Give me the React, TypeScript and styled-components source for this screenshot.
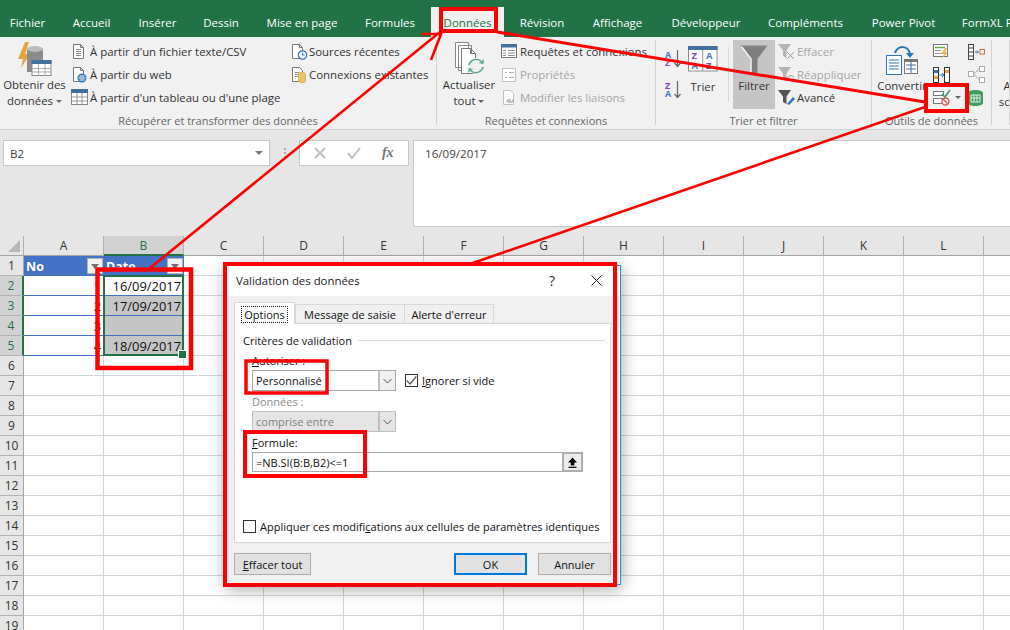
import React from 'react';
import styled, { createGlobalStyle } from 'styled-components';

const Global = createGlobalStyle`
  html, body { margin: 0; padding: 0; width: 1010px; height: 630px; overflow: hidden; background: #fff; }
  body { font-family: "Open Sans", "Noto Sans", "Liberation Sans", sans-serif; font-size: 11.4px; color: #333; }
  * { box-sizing: border-box; }
`;

const Page = styled.div`
  position: relative; width: 1010px; height: 630px; overflow: hidden;
  display: flex; flex-direction: column;
`;

/* ---------- tabs ---------- */
const TabStrip = styled.div`
  height: 37px; flex: none; background: #217346; padding-top: 7px; display: flex;
`;
const Tab = styled.div<{ $w: number; $active?: boolean }>`
  flex: none; width: ${p => p.$w}px; height: 30px; display: flex; align-items: center; justify-content: center;
  white-space: nowrap; font-size: 11.5px;
  color: ${p => (p.$active ? '#217346' : '#fff')};
  background: ${p => (p.$active ? '#f1f1f1' : 'transparent')};
`;

/* ---------- ribbon ---------- */
const Ribbon = styled.div`
  height: 93px; flex: none; background: #f1f1f1; border-bottom: 1px solid #d2d2d2; padding-top: 3px; display: flex;
`;
const Group = styled.div<{ $w: number }>`
  position: relative; flex: none; width: ${p => p.$w}px; height: 88px; display: flex; flex-direction: column;
  &::after { content: ''; position: absolute; right: 0; top: 0; bottom: 3px; width: 1px; background: #d2d2d2; }
`;
const GroupBody = styled.div<{ $pl?: number }>`
  height: 74px; display: flex; padding-left: ${p => p.$pl ?? 0}px;
`;
const GroupLabel = styled.div`
  height: 14px; line-height: 14px; text-align: center; color: #666; font-size: 11px; white-space: nowrap;
  padding-right: 1px;
`;
const BigButton = styled.div<{ $w: number; $on?: boolean; $ml?: number; $top?: number }>`
  flex: none; width: ${p => p.$w}px; height: 69px; margin-left: ${p => p.$ml ?? 0}px;
  padding-top: ${p => p.$top ?? 2}px;
  display: flex; flex-direction: column; align-items: center;
  background: ${p => (p.$on ? '#c5c5c5' : 'transparent')};
  color: #333; white-space: nowrap;
`;
const BigIconSlot = styled.div<{ $h?: number }>`
  height: ${p => p.$h ?? 37}px; display: flex; align-items: flex-start; justify-content: center;
`;
const BigText = styled.div`
  line-height: 16px; display: flex; align-items: center; gap: 3px; font-size: 11.4px;
`;
const Caret = styled.span`
  display: inline-block; width: 0; height: 0; border-left: 3px solid transparent; border-right: 3px solid transparent;
  border-top: 3px solid #666;
`;
const ToolCaret = styled(Caret)`
  margin-left: 4px;
`;
const Column = styled.div<{ $w?: number; $ml?: number }>`
  flex: none; width: ${p => (p.$w ? `${p.$w}px` : 'auto')}; margin-left: ${p => p.$ml ?? 0}px;
  display: flex; flex-direction: column;
`;
const MiniRow = styled.div<{ $off?: boolean; $h?: number }>`
  height: ${p => p.$h ?? 23}px; display: flex; align-items: center; white-space: nowrap; font-size: 11.4px;
  color: ${p => (p.$off ? '#a6a6a6' : '#333')};
`;
const IconSlot = styled.div<{ $w?: number }>`
  flex: none; width: ${p => p.$w ?? 19}px; display: flex; align-items: center; justify-content: flex-start;
`;
const VRule = styled.div`
  flex: none; width: 1px; height: 55px; margin: 7px 4px 0 10px; background: #d8d8d8;
`;
const TruncText = styled.div`
  position: absolute; left: 2px; top: 38px; width: 60px; text-align: center; line-height: 16px; font-size: 11.4px; white-space: nowrap; color: #333;
`;

/* ---------- formula bar ---------- */
const FormulaArea = styled.div`
  height: 106px; flex: none; background: #e6e6e6; padding: 10px 0 0 3px; display: flex; align-items: flex-start;
`;
const NameBox = styled.div`
  flex: none; width: 267px; height: 26px; background: #fff; border: 1px solid #c6c6c6; display: flex; align-items: center;
  justify-content: space-between; padding: 0 6px; font-size: 11.6px; color: #444;
  &::after { content: ''; border-left: 4px solid transparent; border-right: 4px solid transparent; border-top: 4px solid #777; }
`;
const Grip = styled.div`
  flex: none; width: 2px; height: 10px; margin: 8px 13px 0 14px;
  background: repeating-linear-gradient(#aaa 0 2px, transparent 2px 4px);
`;
const FxBox = styled.div`
  flex: none; width: 110px; height: 26px; background: #fff; border: 1px solid #c6c6c6; display: flex; align-items: center;
  justify-content: space-around; padding: 0 4px; color: #bdbdbd;
`;
const FxLabel = styled.span`
  font-family: "Liberation Serif", serif; font-style: italic; font-weight: 700; font-size: 14px; color: #777;
`;
const FormulaBox = styled.div`
  flex: none; margin-left: 4px; width: 600px; height: 87px; background: #fff; border: 1px solid #c6c6c6;
  padding: 5px 11px; font-size: 11.6px; color: #444; line-height: 16px;
`;

/* ---------- sheet ---------- */
const Sheet = styled.div`
  position: relative; flex: 1; overflow: hidden; display: grid;
  grid-template-columns: 24px repeat(13, 80px); grid-auto-rows: 20px; background: #fff;
`;
const Corner = styled.div`
  background: #e6e6e6; border-right: 1px solid #b1b1b1; border-bottom: 1px solid #a5a5a5; position: relative;
  &::after { content: ''; position: absolute; right: 3px; bottom: 3px; width: 0; height: 0;
    border-left: 12px solid transparent; border-bottom: 12px solid #b7b7b7; }
`;
const ColHead = styled.div<{ $on?: boolean }>`
  display: flex; align-items: center; justify-content: center; font-size: 12px;
  background: ${p => (p.$on ? '#d2d2d2' : '#e6e6e6')};
  color: ${p => (p.$on ? '#217346' : '#333')};
  border-right: 1px solid #b1b1b1;
  border-bottom: ${p => (p.$on ? '2px solid #217346' : '1px solid #a5a5a5')};
`;
const RowHead = styled.div<{ $on?: boolean }>`
  display: flex; align-items: center; justify-content: center; font-size: 12px;
  background: ${p => (p.$on ? '#d2d2d2' : '#e6e6e6')};
  color: ${p => (p.$on ? '#217346' : '#333')};
  border-right: ${p => (p.$on ? '2px solid #217346' : '1px solid #a5a5a5')};
  border-bottom: 1px solid #b1b1b1;
`;
const Cell = styled.div<{ $table?: boolean; $sel?: boolean }>`
  display: flex; align-items: center; justify-content: flex-end; padding-right: 2px;
  font-size: 12.9px; color: #111; white-space: nowrap;
  background: ${p => (p.$sel ? '#c6c6c6' : '#fff')};
  border-right: 1px solid #d4d4d4;
  border-bottom: 1px solid ${p => (p.$table ? '#4472c4' : '#d4d4d4')};
`;
const HeadCell = styled.div`
  display: flex; align-items: center; justify-content: space-between; padding: 0 1px 0 2px;
  background: #4472c4; color: #fff; font-weight: 700; font-size: 12.5px;
`;
const FilterBtn = styled.div`
  width: 16px; height: 16px; background: #f1f1f1; border: 1px solid #b5b5b5; display: flex; align-items: center; justify-content: center;
  &::after { content: ''; border-left: 4px solid transparent; border-right: 4px solid transparent; border-top: 5px solid #6f6f6f; }
`;
const Selection = styled.div`
  position: absolute; left: 103px; top: 39px; width: 81px; height: 81px; border: 2px solid #217346; pointer-events: none;
  &::after { content: ''; position: absolute; right: -5px; bottom: -5px; width: 7px; height: 7px; background: #217346; border: 1px solid #fff; }
`;

/* ---------- dialog ---------- */
const Dialog = styled.div`
  position: absolute; left: 226px; top: 265px; width: 395px; height: 320px; background: #f0f0f0;
  border: 1px solid #2b8ee6; box-shadow: 0 3px 16px rgba(0,0,0,.4);
  display: flex; flex-direction: column; color: #111; font-size: 11px;
`;
const TitleBar = styled.div`
  flex: none; height: 30px; background: #fff; display: flex; align-items: center; padding: 0 18px 2px 9px; font-size: 11.4px; color: #222;
`;
const TitleText = styled.div`flex: 1;`;
const Help = styled.div`font-size: 14px; width: 42px; color: #333;`;
const DialogBody = styled.div`
  flex: 1; display: flex; flex-direction: column; padding: 7px 9px 0 7px;
`;
const DTabs = styled.div`
  display: flex; height: 21px; align-items: flex-end; position: relative; z-index: 1;
`;
const DTab = styled.div<{ $w: number; $on?: boolean }>`
  flex: none; width: ${p => p.$w}px; height: ${p => (p.$on ? 22 : 20)}px; display: flex; align-items: center; justify-content: center;
  padding-top: 1px;
  background: ${p => (p.$on ? '#fff' : '#f0f0f0')}; border: 1px solid #d9d9d9;
  border-bottom: ${p => (p.$on ? 'none' : '1px solid #d9d9d9')}; margin-right: ${p => (p.$on ? 0 : -1)}px; white-space: nowrap;
`;
const Focus = styled.span`border: 1px dotted #222; padding: 0 2px; line-height: 15px;`;
const Panel = styled.div`
  height: 220px; margin-top: -1px; background: #fff; border: 1px solid #d9d9d9; padding: 8px 5px 8px 8px; display: flex; flex-direction: column;
`;
const Legend = styled.div`
  height: 16px; display: flex; align-items: center; gap: 6px;
  &::after { content: ''; flex: 1; height: 1px; background: #dcdcdc; }
`;
const Indented = styled.div`
  margin-left: 9px; display: flex; flex-direction: column;
`;
const FieldLabel = styled.div<{ $off?: boolean; $mt: number }>`
  height: 16px; line-height: 16px; margin-top: ${p => p.$mt}px; color: ${p => (p.$off ? '#8a8a8a' : '#111')};
`;
const SelectRow = styled.div<{ $mt: number }>`
  display: flex; align-items: center; margin-top: ${p => p.$mt}px;
`;
const SelectBox = styled.div<{ $off?: boolean }>`
  flex: none; width: 144px; height: 21px; display: flex; align-items: center; padding-left: 3px; position: relative;
  border: 1px solid ${p => (p.$off ? '#bfbfbf' : '#a8a8a8')};
  background: ${p => (p.$off ? '#e5e5e5' : '#fff')};
  color: ${p => (p.$off ? '#808080' : '#111')};
`;
const SelectArrow = styled.div<{ $off?: boolean }>`
  position: absolute; right: 0; top: 0; bottom: 0; width: 17px; display: flex; align-items: center; justify-content: center;
  background: ${p => (p.$off ? '#e5e5e5' : '#f0f0f0')}; border-left: 2px solid #bfbfbf;
`;
const Check = styled.div<{ $ml?: number }>`
  flex: none; width: 13px; height: 13px; margin-left: ${p => p.$ml ?? 0}px; border: 1px solid #333; background: #fff; display: flex; align-items: center; justify-content: center;
`;
const CheckLabel = styled.div<{ $ml: number }>`
  margin-left: ${p => p.$ml}px; white-space: nowrap;
`;
const FormulaInput = styled.div`
  position: relative; width: 331px; height: 20px; margin-top: 1px; border: 1px solid #a8a8a8; background: #fff;
  display: flex; align-items: center; padding-left: 3px;
`;
const RefButton = styled.div`
  position: absolute; right: -1px; top: -1px; width: 21px; height: 20px; border: 2px solid #adadad; background: #ededed;
  display: flex; align-items: center; justify-content: center;
`;
const ApplyRow = styled.div`
  margin-top: auto; height: 16px; display: flex; align-items: center;
`;
const Footer = styled.div`
  display: flex; margin-top: 10px; height: 22px;
`;
const DButton = styled.div<{ $w: number; $primary?: boolean; $auto?: boolean; $ml?: number }>`
  flex: none; width: ${p => p.$w}px; display: flex; align-items: center; justify-content: center;
  background: #e1e1e1; border: ${p => (p.$primary ? '2px solid #0078d7' : '1px solid #adadad')};
  margin-left: ${p => (p.$auto ? 'auto' : `${p.$ml ?? 0}px`)};
`;

/* ---------- annotation overlay ---------- */
const Overlay = styled.svg`
  position: absolute; left: 0; top: 0; width: 1010px; height: 630px; pointer-events: none;
`;

/* ---------- icons ---------- */
const Svg = (p: { w: number; h: number; children: React.ReactNode }) => (
  <svg width={p.w} height={p.h} viewBox={`0 0 ${p.w} ${p.h}`} fill="none" style={{ display: 'block' }}>{p.children}</svg>
);
const Page14 = ({ c = '#777' }: { c?: string }) => (
  <path d="M2.5 1.5h7l3 3v11h-10z M9.5 1.5v3h3" stroke={c} fill="#fff" />
);
const DocLines = () => (
  <Svg w={16} h={17}><Page14 /><path d="M5 6.5h5M5 8.5h5M5 10.5h5M5 12.5h5" stroke="#888" /></Svg>
);
const DocWeb = () => (
  <Svg w={16} h={17}><Page14 /><circle cx="11" cy="12" r="4.5" fill="#2e75b6" /><path d="M7.5 12h7M8.5 10h5M8.5 14h5" stroke="#fff" /></Svg>
);
const TableIcon = () => (
  <Svg w={18} h={17}>
    <rect x=".5" y=".5" width="16" height="15" fill="#fff" stroke="#888" />
    <rect x="0" y="0" width="17" height="4" fill="#41719c" />
    <path d="M1 8h15M1 12h15M6 4v11M11 4v11" stroke="#999" />
  </Svg>
);
const DocClock = () => (
  <Svg w={18} h={17}><Page14 /><circle cx="12.5" cy="12" r="4.2" fill="#fff" stroke="#2e75b6" strokeWidth="1.2" /><path d="M12.5 9.8V12h2" stroke="#2e75b6" /></Svg>
);
const DocDb = () => (
  <Svg w={18} h={17}>
    <path d="M2.5 1.5h7l3 3v11h-10z" stroke="#777" fill="#fff" /><path d="M5 6.5h4M5 8.5h4M5 10.5h4" stroke="#888" />
    <path d="M8.5 8c0-2 7-2 7 0v7c0 2-7 2-7 0z" fill="#e9c46a" stroke="#d9b455" />
  </Svg>
);
const DbBig = () => (
  <Svg w={34} h={34}>
    <path d="M7 0L0 17h5l-2 9 9-14H7l4-12z" fill="#e8a33d" />
    <path d="M9 8c0-4 16-4 16 0v22H9z" fill="#8b8b8b" /><ellipse cx="17" cy="7" rx="8" ry="3" fill="#bdbdbd" />
    <rect x="14" y="18.5" width="19" height="15" fill="#fff" stroke="#888" />
    <rect x="13.5" y="18" width="20" height="4" fill="#41719c" />
    <path d="M14 26.5h19M14 30h19M20.5 22v12M27 22v12" stroke="#aaa" />
  </Svg>
);
const Refresh = () => (
  <Svg w={34} h={34}>
    <path d="M3.5.5h13v25h-13z M6.5 3.5h13v25h-13z" stroke="#888" fill="#fff" />
    <path d="M9.5 6.5h9l5 5v20h-14z M18.5 6.5v5h5" stroke="#777" fill="#fff" />
    <circle cx="24" cy="24" r="8" fill="#f1f1f1" />
    <path d="M18 23a6.5 6.5 0 0 1 11-3l-2.5 1 5 1 .5-5-2 2a8.5 8.5 0 0 0-14 4z M30 25a6.5 6.5 0 0 1-11 3l2.5-1-5-1-.5 5 2-2a8.5 8.5 0 0 0 14-4z" fill="#5ea88c" />
  </Svg>
);
const QueriesIcon = () => (
  <Svg w={16} h={15}>
    <rect x=".5" y=".5" width="15" height="13" fill="#fff" stroke="#777" /><rect width="16" height="3.5" fill="#41719c" />
    <path d="M2 6.5h3M2 9h3M2 11.5h3M7 6.5h7M7 9h7M7 11.5h7" stroke="#999" />
  </Svg>
);
const PropsIcon = () => (
  <Svg w={16} h={16}>
    <rect x="1.5" y="1.5" width="13" height="13" fill="#fff" stroke="#c2c2c2" />
    <path d="M4 5.5h2M8 5.5h5M4 10.5h2M8 10.5h5" stroke="#b5b5b5" />
  </Svg>
);
const LinksIcon = () => (
  <Svg w={16} h={17}>
    <path d="M2.5 1.5h7l3 3v11h-10z" stroke="#c2c2c2" fill="#fff" />
    <path d="M6 13a2 2 0 0 1 2-2h2M10 13a2 2 0 0 0 2-2h1M7 13h4" stroke="#aaa" strokeWidth="1.4" />
  </Svg>
);
const SortIcon = ({ top, bottom, tc, bc }: { top: string; bottom: string; tc: string; bc: string }) => (
  <svg width="19" height="20" viewBox="0 0 19 20" style={{ display: 'block' }}>
    <text x="1" y="9.500" fontSize="9" fontWeight="700" fontFamily="Open Sans, sans-serif" fill={tc}>{top}</text>
    <text x="1" y="18" fontSize="9" fontWeight="700" fontFamily="Open Sans, sans-serif" fill={bc}>{bottom}</text>
    <path d="M13.500 2v16M10.500 15l3 3.500 3-3.500" stroke="#666" fill="none" strokeWidth="1.200" />
  </svg>
);
const TrierIcon = () => (
  <svg width="30" height="26" viewBox="0 0 30 26" style={{ display: 'block' }}>
    <rect x=".5" y=".5" width="28.5" height="24.5" fill="#fff" stroke="#8f8f8f" />
    <rect width="29.5" height="4" fill="#41719c" />
    <path d="M14.7 4v21" stroke="#8f8f8f" />
    <g fontFamily="Open Sans, sans-serif" fontSize="9.500" fontWeight="700">
      <text x="3.500" y="13" fill="#8a4bab">Z</text><text x="3.500" y="23" fill="#4a7ebb">A</text>
      <text x="18" y="13" fill="#4a7ebb">A</text><text x="18" y="23" fill="#8a4bab">Z</text>
    </g>
  </svg>
);
const BigFunnel = () => (
  <Svg w={28} h={28}>
    <path d="M.5.5h27L17.500 14v14h-7V14z" fill="#7f7f7f" />
    <path d="M1.500 1.500L11 14v14" stroke="#f5f5f5" strokeWidth="1.500" fill="none" />
    <path d="M1.500 1h25" stroke="#9a9a9a" />
  </Svg>
);
const SmallFunnel = ({ c, children }: { c: string; children?: React.ReactNode }) => (
  <Svg w={19} h={17}>
    <path d="M0 1h13L8.500 7.500V15L5 13V7.500z" fill={c} />
    {children}
  </Svg>
);
const ConvertIcon = () => (
  <Svg w={32} h={30}>
    <rect x=".5" y="10.500" width="15" height="19" fill="#fff" stroke="#2e75b6" />
    <path d="M3 15h10M3 18h10M3 21h10M3 24h10" stroke="#2e75b6" />
    <rect x="18.500" y="14.500" width="13" height="14" fill="#fff" stroke="#777" />
    <rect x="18" y="14" width="14" height="3" fill="#777" />
    <path d="M20 20h10M20 24h10M25 17v11" stroke="#41719c" />
    <path d="M9 8c3-8 13-8 15 1" stroke="#2e75b6" strokeWidth="2" fill="none" /><path d="M20 8l4 5 4-5z" fill="#2e75b6" />
  </Svg>
);
const FlashFill = () => (
  <Svg w={17} h={16}>
    <rect x=".5" y=".5" width="14" height="12" fill="#fff" stroke="#777" />
    <path d="M2 3.500h10" stroke="#70ad47" strokeWidth="1.5" /><path d="M2 6.500h6M2 9.500h6" stroke="#999" />
    <path d="M12 4L8 10h3L9 15l6-7h-3l2-4z" fill="#eeb14a" />
  </Svg>
);
const SplitIcon = () => (
  <Svg w={17} h={16}>
    <rect x=".5" y=".5" width="5" height="15" fill="#fff" stroke="#333" />
    <rect x="11.500" y=".5" width="5" height="15" fill="#fff" stroke="#333" />
    <rect x="1" y="3" width="4" height="3" fill="#41719c" /><rect x="1" y="9" width="4" height="3" fill="#e8a33d" />
    <rect x="12" y="3" width="4" height="3" fill="#e8a33d" />
    <path d="M6.500 8h4M9 6l2 2-2 2" stroke="#2e75b6" fill="none" />
  </Svg>
);
const ValidIcon = () => (
  <Svg w={18} h={17}>
    <rect x=".5" y="2.500" width="10" height="4" fill="#fff" stroke="#777" />
    <rect x=".5" y="9.500" width="10" height="5" fill="#fff" stroke="#777" />
    <path d="M9 5l3 3 5-7" stroke="#3f9a6e" strokeWidth="1.6" fill="none" />
    <circle cx="12.500" cy="12.500" r="3.500" fill="#fff" stroke="#d9534f" strokeWidth="1.3" /><path d="M10 10l5 5" stroke="#d9534f" strokeWidth="1.2" />
  </Svg>
);
const RemoveDup = () => (
  <Svg w={17} h={16}>
    <rect x=".5" y=".5" width="5" height="15" fill="#fff" stroke="#444" /><path d="M1 4h4M1 8h4M1 12h4" stroke="#444" />
    <path d="M7 8h3M9 6.500l1.500 1.500L9 9.500" stroke="#2e75b6" fill="none" />
    <rect x="12" y="5.500" width="4.500" height="4.500" fill="#fff" stroke="#d9644a" />
  </Svg>
);
const RelIcon = () => (
  <Svg w={17} h={17}>
    <rect x=".5" y="5.500" width="5" height="5" fill="#fff" stroke="#aaa" /><rect x="11.500" y=".5" width="5" height="5" fill="#fff" stroke="#aaa" />
    <rect x="11.500" y="11.500" width="5" height="5" fill="#fff" stroke="#aaa" /><path d="M5.500 8l6-5M5.500 8l6 6" stroke="#aaa" />
  </Svg>
);
const DataModel = () => (
  <Svg w={15} h={16}>
    <path d="M0 3c0-4 15-4 15 0v10c0 4-15 4-15 0z" fill="#3d9d5f" />
    <path d="M3 5h9v7H3zM3 8h9M6 5v7M9 5v7" stroke="#dff1e4" fill="none" />
  </Svg>
);
const Chevron = () => (
  <svg width="9" height="6" viewBox="0 0 9 6" style={{ display: 'block' }}><path d="M.5 1l4 4 4-4" stroke="#555" fill="none" /></svg>
);
const Tick = ({ c = '#555' }: { c?: string }) => (
  <svg width="11" height="9" viewBox="0 0 11 9" style={{ display: 'block' }}><path d="M.7 4.500l3.300 3.500 6.300-7.500" stroke={c} strokeWidth="1.200" fill="none" /></svg>
);

/* ---------- data ---------- */
const tabs: [string, number][] = [
  ['Fichier', 55], ['Accueil', 73], ['Insérer', 59], ['Dessin', 68], ['Mise en page', 94], ['Formules', 82],
  ['Données', 73], ['Révision', 76], ['Affichage', 75], ['Développeur', 102], ['Compléments', 97], ['Power Pivot', 99], ['FormXL Pro', 80],
];
const cols = 'ABCDEFGHIJKLM'.split('');
const rows = Array.from({ length: 19 }, (_, i) => i + 1);
const dates: Record<number, string> = { 2: '16/09/2017', 3: '17/09/2017', 5: '18/09/2017' };

export default function App() {
  return (
    <Page>
      <Global />
      <TabStrip>
        {tabs.map(([t, w]) => <Tab key={t} $w={w} $active={t === 'Données'}>{t}</Tab>)}
      </TabStrip>

      <Ribbon>
        <Group $w={437}>
          <GroupBody $pl={4}>
            <BigButton $w={61}>
              <BigIconSlot><DbBig /></BigIconSlot>
              <BigText>Obtenir des</BigText>
              <BigText>données <Caret /></BigText>
            </BigButton>
            <Column $w={219} $ml={6}>
              <MiniRow><IconSlot><DocLines /></IconSlot>À partir d'un fichier texte/CSV</MiniRow>
              <MiniRow><IconSlot><DocWeb /></IconSlot>À partir du web</MiniRow>
              <MiniRow><IconSlot><TableIcon /></IconSlot>À partir d'un tableau ou d'une plage</MiniRow>
            </Column>
            <Column>
              <MiniRow><IconSlot><DocClock /></IconSlot>Sources récentes</MiniRow>
              <MiniRow><IconSlot><DocDb /></IconSlot>Connexions existantes</MiniRow>
            </Column>
          </GroupBody>
          <GroupLabel>Récupérer et transformer des données</GroupLabel>
        </Group>

        <Group $w={219}>
          <GroupBody $pl={3}>
            <BigButton $w={58}>
              <BigIconSlot><Refresh /></BigIconSlot>
              <BigText>Actualiser</BigText>
              <BigText>tout <Caret /></BigText>
            </BigButton>
            <Column $ml={3}>
              <MiniRow><IconSlot><QueriesIcon /></IconSlot>Requêtes et connexions</MiniRow>
              <MiniRow $off><IconSlot><PropsIcon /></IconSlot>Propriétés</MiniRow>
              <MiniRow $off><IconSlot><LinksIcon /></IconSlot>Modifier les liaisons</MiniRow>
            </Column>
          </GroupBody>
          <GroupLabel>Requêtes et connexions</GroupLabel>
        </Group>

        <Group $w={216}>
          <GroupBody $pl={8}>
            <Column $w={24}>
              <MiniRow $h={36}><SortIcon top="A" bottom="Z" tc="#4a7ebb" bc="#8a4bab" /></MiniRow>
              <MiniRow $h={26}><SortIcon top="Z" bottom="A" tc="#8a4bab" bc="#4a7ebb" /></MiniRow>
            </Column>
            <BigButton $w={30} $top={6}>
              <BigIconSlot $h={33}><TrierIcon /></BigIconSlot>
              <BigText>Trier</BigText>
            </BigButton>
            <VRule />
            <BigButton $w={42} $on $top={5}>
              <BigIconSlot $h={33}><BigFunnel /></BigIconSlot>
              <BigText>Filtrer</BigText>
            </BigButton>
            <Column $ml={3}>
              <MiniRow $off><IconSlot><SmallFunnel c="#b5b5b5"><path d="M9 9l7 7M16 9l-7 7" stroke="#999" /></SmallFunnel></IconSlot>Effacer</MiniRow>
              <MiniRow $off><IconSlot><SmallFunnel c="#b5b5b5"><path d="M9 13a4 4 0 0 1 7-2" stroke="#999" fill="none" /></SmallFunnel></IconSlot>Réappliquer</MiniRow>
              <MiniRow><IconSlot><SmallFunnel c="#555"><path d="M9 15l6-7 2 2-6 6z" fill="#2e75b6" /></SmallFunnel></IconSlot>Avancé</MiniRow>
            </Column>
          </GroupBody>
          <GroupLabel>Trier et filtrer</GroupLabel>
        </Group>

        <Group $w={120}>
          <GroupBody $pl={6}>
            <BigButton $w={48} $top={5}>
              <BigIconSlot $h={33}><ConvertIcon /></BigIconSlot>
              <BigText>Convertir</BigText>
            </BigButton>
            <Column $w={35} $ml={7}>
              <MiniRow><FlashFill /></MiniRow>
              <MiniRow><SplitIcon /></MiniRow>
              <MiniRow><ValidIcon /><ToolCaret /></MiniRow>
            </Column>
            <Column>
              <MiniRow><RemoveDup /></MiniRow>
              <MiniRow><RelIcon /></MiniRow>
              <MiniRow><DataModel /></MiniRow>
            </Column>
          </GroupBody>
          <GroupLabel>Outils de données</GroupLabel>
        </Group>

        <Group $w={18}>
          <TruncText>Analyse<br />scénarios</TruncText>
        </Group>
      </Ribbon>

      <FormulaArea>
        <NameBox>B2</NameBox>
        <Grip />
        <FxBox>
          <svg width="12" height="12" viewBox="0 0 12 12"><path d="M1 1l10 10M11 1L1 11" stroke="#bdbdbd" strokeWidth="1.800" /></svg>
          <svg width="14" height="12" viewBox="0 0 14 12"><path d="M1 6l4 5 8-10" stroke="#bdbdbd" strokeWidth="2" fill="none" /></svg>
          <FxLabel>fx</FxLabel>
        </FxBox>
        <FormulaBox>16/09/2017</FormulaBox>
      </FormulaArea>

      <Sheet>
        <Corner />
        {cols.map(c => <ColHead key={c} $on={c === 'B'}>{c}</ColHead>)}
        {rows.map(r => (
          <React.Fragment key={r}>
            <RowHead $on={r >= 2 && r <= 5}>{r}</RowHead>
            {cols.map(c => {
              if (r === 1 && c === 'A') return <HeadCell key={c}>No<FilterBtn /></HeadCell>;
              if (r === 1 && c === 'B') return <HeadCell key={c}>Date<FilterBtn /></HeadCell>;
              const inTable = r >= 2 && r <= 5 && (c === 'A' || c === 'B');
              return (
                <Cell key={c} $table={inTable} $sel={c === 'B' && r >= 3 && r <= 5}>
                  {c === 'A' && inTable ? r - 1 : c === 'B' ? dates[r] : ''}
                </Cell>
              );
            })}
          </React.Fragment>
        ))}
        <Selection />
      </Sheet>

      <Dialog>
        <TitleBar>
          <TitleText>Validation des données</TitleText>
          <Help>?</Help>
          <svg width="11" height="11" viewBox="0 0 11 11"><path d="M.5.5l10 10M10.500.5l-10 10" stroke="#222" /></svg>
        </TitleBar>
        <DialogBody>
          <DTabs>
            <DTab $w={61} $on><Focus>Options</Focus></DTab>
            <DTab $w={110}>Message de saisie</DTab>
            <DTab $w={90}>Alerte d'erreur</DTab>
          </DTabs>
          <Panel>
            <Legend>Critères de validation</Legend>
            <Indented>
              <FieldLabel $mt={5}><u>A</u>utoriser :</FieldLabel>
              <SelectRow $mt={1}>
                <SelectBox>Personnalisé<SelectArrow><Chevron /></SelectArrow></SelectBox>
                <Check $ml={9}><Tick /></Check>
                <CheckLabel $ml={4}><u>I</u>gnorer si vide</CheckLabel>
              </SelectRow>
              <FieldLabel $off $mt={3}>Données :</FieldLabel>
              <SelectRow $mt={1}>
                <SelectBox $off>comprise entre<SelectArrow $off><Chevron /></SelectArrow></SelectBox>
              </SelectRow>
              <FieldLabel $mt={3}><u>F</u>ormule:</FieldLabel>
              <FormulaInput>
                =NB.SI(B:B,B2)&lt;=1
                <RefButton>
                  <svg width="11" height="11" viewBox="0 0 11 11"><path d="M5.500.5L10 5.500H7.300V8.500H3.700V5.500H1z" fill="#000" /><path d="M1.500 10.300h8" stroke="#000" strokeWidth="1.200" /></svg>
                </RefButton>
              </FormulaInput>
            </Indented>
            <ApplyRow>
              <Check />
              <CheckLabel $ml={4}>Appliquer ces modifi<u>c</u>ations aux cellules de paramètres identiques</CheckLabel>
            </ApplyRow>
          </Panel>
          <Footer>
            <DButton $w={77}><span><u>E</u>ffacer tout</span></DButton>
            <DButton $w={73} $primary $auto>OK</DButton>
            <DButton $w={73} $ml={11}>Annuler</DButton>
          </Footer>
        </DialogBody>
      </Dialog>

      <Overlay viewBox="0 0 1010 630" fill="none" stroke="#ff0000">
        <rect x="441" y="9" width="55" height="22" strokeWidth="4" />
        <rect x="926" y="85" width="41" height="26" strokeWidth="4" />
        <rect x="97.500" y="269.500" width="93.500" height="98.500" strokeWidth="4.500" />
        <rect x="225" y="264" width="390" height="321" strokeWidth="4" />
        <rect x="246" y="361" width="81" height="32" strokeWidth="3.500" />
        <rect x="245" y="432" width="120" height="44" strokeWidth="4" />
        <path d="M150 268L440 32M421 34H441L431 60" strokeWidth="2.600" />
        <path d="M497 32L925 102" strokeWidth="3" />
        <path d="M467 265L925 107" strokeWidth="2.600" />
      </Overlay>
    </Page>
  );
}
